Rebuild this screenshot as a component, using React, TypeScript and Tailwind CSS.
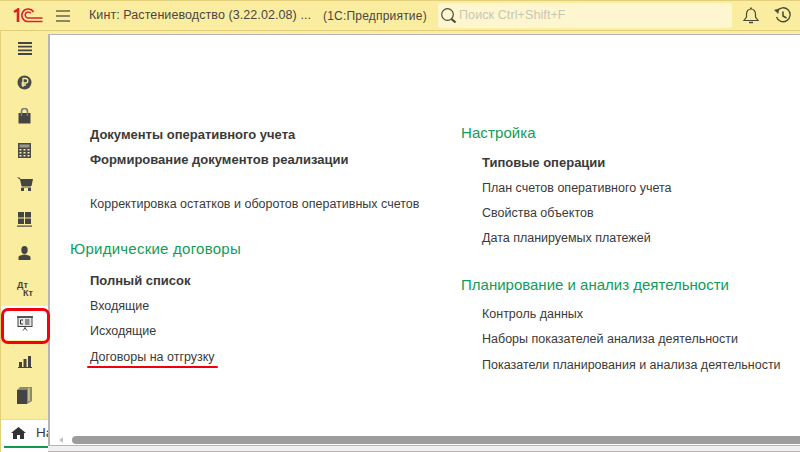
import React from "react";

function Side({ children, className = "" }: { children: React.ReactNode; className?: string }) {
  return <div className={"h-[34px] shrink-0 flex items-center justify-center " + className}>{children}</div>;
}

function Item({ children, bold = false }: { children: React.ReactNode; bold?: boolean }) {
  return (
    <div className={"h-[25.4px] flex items-center text-[#3a3a3a] whitespace-nowrap " + (bold ? "font-bold text-[13px]" : "text-[12.5px]")}>
      {children}
    </div>
  );
}

function Head({ children, className = "" }: { children: React.ReactNode; className?: string }) {
  return <div className={"text-[15px] leading-[20px] text-[#0f9d58] whitespace-nowrap " + className}>{children}</div>;
}

export default function App() {
  return (
    <div className="w-[800px] h-[452px] overflow-hidden bg-[#fbeda0] flex flex-col font-['Liberation_Sans',Arial,sans-serif] relative">
      {/* top bar */}
      <div className="h-[31px] shrink-0 flex items-center border-t border-b border-[#e2d07c] bg-[#fbeda0]">
        <svg width="30" height="15" viewBox="0 0 30 15" className="ml-[13px] shrink-0" fill="none" stroke="#d9232c">
          <path d="M1 4 L5 1.5 V14" strokeWidth="2.6" />
          <path d="M20.5 4 A6.3 6.3 0 1 0 14.5 13.6 H29.5" strokeWidth="1.5" />
          <path d="M17.8 5.2 A3.1 3.1 0 1 0 14.5 10 H29.5" strokeWidth="1.5" />
        </svg>
        <svg width="14" height="12" viewBox="0 0 14 12" className="ml-[13px] shrink-0" stroke="#6a6548" strokeWidth="1.4">
          <path d="M0 1 H14 M0 6 H14 M0 11 H14" />
        </svg>
        <div className="ml-[19px] text-[12.5px] text-[#4a4540] whitespace-nowrap w-[234px] shrink-0 tracking-[0.08px]">Кинт: Растениеводство (3.22.02.08) ...</div>
        <div className="text-[12px] text-[#4a4540] whitespace-nowrap w-[115px] shrink-0 tracking-[0.2px]">(1С:Предприятие)</div>
        <div className="h-[25px] w-[294px] shrink-0 bg-[#fdf6cf] rounded-[3px] flex items-center">
          <svg width="17" height="17" viewBox="0 0 17 17" className="ml-[2px] shrink-0" fill="none" stroke="#4a4a3c">
            <circle cx="7.5" cy="7.5" r="5.8" strokeWidth="1.2" />
            <path d="M11.5 12 L15.5 15.5" strokeWidth="2.2" />
          </svg>
          <span className="ml-[2px] text-[12.5px] text-[#c9c7b4] tracking-[0.1px]">Поиск Ctrl+Shift+F</span>
        </div>
        <svg width="16" height="17" viewBox="0 0 16 17" className="ml-[11px] shrink-0" fill="none" stroke="#4a4a3c" strokeWidth="1.2">
          <path d="M1 13.5 H15 L12.5 10 V7 A4.5 5 0 0 0 3.5 7 V10 Z" />
          <path d="M6 15.5 H10 M8 0.5 V2" strokeWidth="1.6" />
        </svg>
        <svg width="18" height="17" viewBox="0 0 18 17" className="ml-[15px] shrink-0" fill="none" stroke="#4a4a3c">
          <path d="M3.2 4 A7 7 0 1 1 2.5 10" strokeWidth="1.3" />
          <path d="M0.5 3 L5 2 L4 6.5 Z" fill="#4a4a3c" strokeWidth="0.5" />
          <path d="M9 4.5 V9 L12.5 11" strokeWidth="1.6" />
        </svg>
      </div>
      <div className="flex flex-1 min-h-0">
        {/* sidebar */}
        <div className="w-[48px] shrink-0 flex flex-col border-l border-[#e2d07c]">
          <div className="h-[388px] shrink-0 flex flex-col">
            <Side>
              <svg width="14" height="13" viewBox="0 0 14 13" stroke="#444" strokeWidth="1.8"><path d="M0 1 H14 M0 4.7 H14 M0 8.3 H14 M0 12 H14" /></svg>
            </Side>
            <Side>
              <svg width="15" height="15" viewBox="0 0 15 15"><circle cx="7.5" cy="7.5" r="7" fill="#4a4a4a" /><path d="M6 12 V3.5 H8.6 A2.2 2.2 0 0 1 8.6 8 H4.5 M4.5 10 H9" fill="none" stroke="#fbeda0" strokeWidth="1.3" /></svg>
            </Side>
            <Side>
              <svg width="13" height="16" viewBox="0 0 13 16"><path d="M0.5 5 H12.5 V15.5 H0.5 Z" fill="#444" /><path d="M3.5 8 V3.5 A3 3 0 0 1 9.5 3.5 V8" fill="none" stroke="#777" strokeWidth="1.6" /></svg>
            </Side>
            <Side>
              <svg width="13" height="15" viewBox="0 0 13 15"><rect width="13" height="15" fill="#4a4a4a" /><rect x="1.5" y="1.5" width="10" height="3" fill="#9a9a80" /><path d="M1.5 6 h2 v1.5 h-2z M5.5 6 h2 v1.5 h-2z M9.5 6 h2 v1.5 h-2z M1.5 9 h2 v1.5 h-2z M5.5 9 h2 v1.5 h-2z M9.5 9 h2 v1.5 h-2z M1.5 12 h2 v1.5 h-2z M5.5 12 h2 v1.5 h-2z M9.5 12 h2 v1.5 h-2z" fill="#fbeda0" /></svg>
            </Side>
            <Side>
              <svg width="16" height="14" viewBox="0 0 16 14"><path d="M0 0.5 H2.5 L3.5 2 H16 L14.5 9 H4.5 L3 2.5 Z" fill="#444" /><path d="M4.5 10 H14" stroke="#444" /><rect x="4" y="11" width="3" height="3" fill="#444" /><rect x="11" y="11" width="3" height="3" fill="#444" /></svg>
            </Side>
            <Side className="mt-[1px]">
              <svg width="15" height="15" viewBox="0 0 15 15" fill="#444"><rect x="1" y="0" width="6" height="5.5" /><rect x="8" y="0" width="6" height="5.5" /><rect x="1" y="6.5" width="6" height="5.5" /><rect x="8" y="6.5" width="6" height="5.5" /><rect x="0" y="13.5" width="15" height="1.2" /></svg>
            </Side>
            <Side>
              <svg width="13" height="14" viewBox="0 0 13 14" fill="#444"><ellipse cx="6.5" cy="4" rx="3.2" ry="4" /><path d="M0.5 14 V11.5 C0.5 9.5 3.5 9 6.5 8.5 C9.5 9 12.5 9.5 12.5 11.5 V14 Z" /></svg>
            </Side>
            <Side className="mt-[2px]">
              <div className="w-[16px] h-[16px] text-[#444] font-bold text-[9px] leading-[8px] ml-[1px]">
                <span className="block">Дт</span>
                <span className="block pl-[6px]">Кт</span>
              </div>
            </Side>
            <Side className="bg-white">
              <svg width="16" height="15" viewBox="0 0 16 15" fill="none"><rect x="1" y="1" width="14" height="9.5" stroke="#444" fill="#e8e8e8" /><path d="M0 1 H16" stroke="#444" strokeWidth="1.6" /><path d="M6 4 H3.5 V8 H6" stroke="#333" /><path d="M8 4 h4.5 M8 6 h4.5 M8 8 h4.5" stroke="#333" /><path d="M8 10.5 V12 M8 12 L6 14.5 M8 12 L10 14.5" stroke="#444" /></svg>
            </Side>
            <Side className="mt-[4px]">
              <svg width="14" height="13" viewBox="0 0 14 13" fill="#444"><rect x="1" y="7" width="3" height="5" /><rect x="5.5" y="4" width="3" height="8" /><rect x="10" y="1" width="3" height="11" /><rect x="0" y="12" width="14" height="1" /></svg>
            </Side>
            <Side>
              <svg width="15" height="17" viewBox="0 0 15 17"><rect x="0" y="3" width="10" height="14" fill="#444" /><path d="M0 3 L3 0 H15 V14 L10 17 V3 Z" fill="#8a8a70" /><path d="M12 1 V14" stroke="#fbeda0" /></svg>
            </Side>
          </div>
          <div className="flex-1 bg-white flex flex-col border-t border-[#d8d8d8] overflow-hidden">
            <div className="h-[26px] shrink-0 flex items-center">
              <svg width="15" height="12" viewBox="0 0 15 12" className="ml-[10px] shrink-0"><path d="M7.5 0 L15 6 H13 V12 H9 V8 H6 V12 H2 V6 H0 Z" fill="#333" /></svg>
              <span className="ml-[10px] text-[13.5px] text-[#3a3a3a]">На</span>
            </div>
            <div className="ml-[3px] h-[2px] bg-[#109a4d] shrink-0" />
          </div>
        </div>
        {/* content */}
        <div className="flex-1 flex flex-col min-w-0 bg-[#fbeda0]">
          <div className="h-[3px] shrink-0" />
          <div className="flex-1 min-h-0 bg-white border-t border-l-2 border-[#b5b5b5] flex pt-[87px] overflow-hidden">
            <div className="w-[391px] shrink-0 flex flex-col pl-[20px]">
              <div className="pl-[20px]">
                <Item bold>Документы оперативного учета</Item>
                <Item bold>Формирование документов реализации</Item>
                <div className="h-[19px]" />
                <Item>Корректировка остатков и оборотов оперативных счетов</Item>
              </div>
              <div className="mt-[22px] mb-[9px]"><Head className="tracking-[0.25px]">Юридические договоры</Head></div>
              <div className="pl-[20px]">
                <Item bold>Полный список</Item>
                <Item>Входящие</Item>
                <Item>Исходящие</Item>
                <Item>Договоры на отгрузку</Item>
              </div>
            </div>
            <div className="flex flex-col pl-[20px] mt-[1px]">
              <div className="mb-[7px]"><Head className="tracking-[0.1px]">Настройка</Head></div>
              <div className="pl-[21px]">
                <Item bold>Типовые операции</Item>
                <Item>План счетов оперативного учета</Item>
                <Item>Свойства объектов</Item>
                <Item>Дата планируемых платежей</Item>
              </div>
              <div className="mt-[23px] mb-[7px]"><Head>Планирование и анализ деятельности</Head></div>
              <div className="pl-[21px]">
                <Item>Контроль данных</Item>
                <Item>Наборы показателей анализа деятельности</Item>
                <Item>Показатели планирования и анализа деятельности</Item>
              </div>
            </div>
          </div>
          {/* scrollbar */}
          <div className="h-[10px] shrink-0 border-l-2 border-b border-[#b5b5b5] flex items-start bg-white">
            <div className="ml-[9px] mt-[1px] w-0 h-0 border-y-[3px] border-y-transparent border-r-[4px] border-r-[#c4c4c4]" />
            <div className="ml-[9px] h-[8px] flex-1 bg-[#9c9c9c] rounded-l-[4px]" />
          </div>
          <div className="h-[6px] shrink-0 bg-[#f0f0f0] border-b border-[#c2b96a]" />
        </div>
      </div>
      {/* annotations */}
      <div className="absolute left-[1px] top-[308px] w-[49px] h-[36px] rounded-[7px] border-[3px] border-[#f5000f]" />
      <div className="absolute left-[87px] top-[366px] w-[131px] h-[2px] bg-[#f0000f] rounded-full" />
    </div>
  );
}
